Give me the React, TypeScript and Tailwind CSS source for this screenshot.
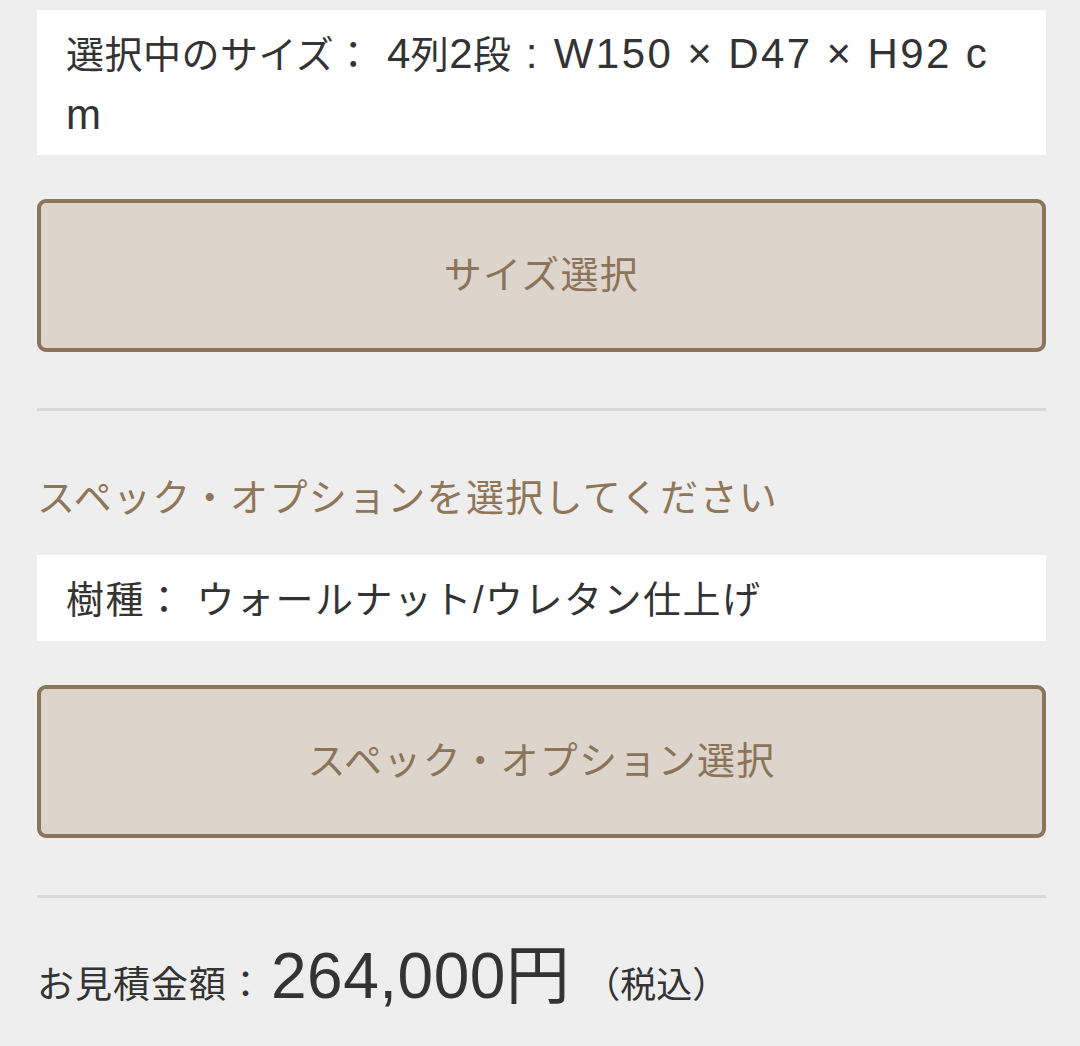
import React from 'react';

const font = "font-['Liberation_Sans','Noto_Sans_CJK_JP',sans-serif]";

function Divider() {
  return <div className="h-[3px] bg-[#d9d9d9]" />;
}

function SelectButton({ label }: { label: string }) {
  return (
    <button className="flex h-[153px] w-full items-center justify-center rounded-[9px] border-[4px] border-[#8b7459] bg-[#ddd5cb] text-[38px] tracking-[1.3px] text-[#8b7459]">
      {label}
    </button>
  );
}

export default function App() {
  return (
    <div className={`min-h-[1046px] bg-[#eeeeee] pl-[37px] pr-[34px] pt-[10px] text-[#333333] ${font}`}>
      <div className="bg-white px-[29px] pb-[9px] pt-[14px] text-[38px] leading-[60px] tracking-[0.5px]">
        選択中のサイズ：
        <span className="ml-[14px]">
          <span className="text-[42px]">4</span>列<span className="text-[42px]">2</span>段
          <span className="text-[42px] tracking-[2.4px]"> : W150 × D47 × H92 c</span>
        </span>
        <br />
        <span className="text-[42px]">m</span>
      </div>

      <div className="mt-[44px]">
        <SelectButton label="サイズ選択" />
      </div>

      <div className="mt-[56px]">
        <Divider />
      </div>

      <p className="mt-[62px] text-[38px] leading-[50px] tracking-[1.3px] text-[#8f7658]">
        スペック・オプションを選択してください
      </p>

      <div className="mt-[32px] bg-white px-[29px] pb-[16px] pt-[20px] text-[38px] leading-[50px] tracking-[1.5px]">
        樹種： ウォールナット/ウレタン仕上げ
      </div>

      <div className="mt-[44px]">
        <SelectButton label="スペック・オプション選択" />
      </div>

      <div className="mt-[57px]">
        <Divider />
      </div>

      <div className="mt-[43px] flex items-baseline leading-[70px]">
        <span className="text-[37px] tracking-[1px]">お見積金額：</span>
        <span className="ml-[6px] text-[64px] tracking-[0.5px]">264,000円</span>
        <span className="ml-[14px] text-[36px]">（税込）</span>
      </div>
    </div>
  );
}
